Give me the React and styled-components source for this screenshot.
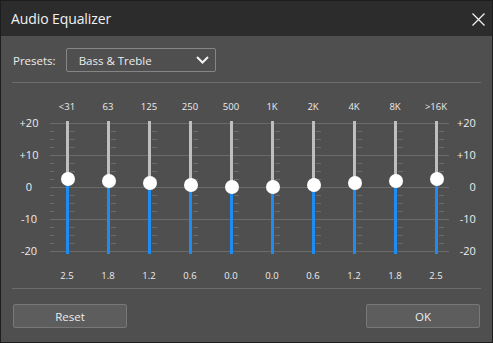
import React from 'react'
import styled, { createGlobalStyle } from 'styled-components'

const GlobalStyle = createGlobalStyle`
  html, body {
    margin: 0;
    padding: 0;
    background: #4f4f4f;
  }
  * {
    box-sizing: border-box;
  }
`

const Window = styled.div`
  width: 493px;
  height: 343px;
  border: 1px solid #1d1d1d;
  background: #4f4f4f;
  display: flex;
  flex-direction: column;
  font-family: "Open Sans", "Noto Sans", sans-serif;
  color: #ececec;
  overflow: hidden;
`

const TitleBar = styled.div`
  height: 35px;
  background: #2c2c2c;
  display: flex;
  align-items: center;
  justify-content: space-between;
  padding: 0 7px 0 10px;
  flex-shrink: 0;
`

const Title = styled.div`
  font-size: 14px;
  letter-spacing: -0.1px;
  color: #f2f2f2;
`

const CloseButton = styled.div`
  width: 13px;
  height: 13px;
  display: flex;
  margin-top: 1px;
`

const Body = styled.div`
  flex: 1;
  display: flex;
  flex-direction: column;
  padding: 0 11px;
`

const PresetRow = styled.div`
  display: flex;
  align-items: center;
  gap: 10px;
  margin-top: 12px;
  padding-left: 1px;
  font-size: 11.5px;
`

const Dropdown = styled.div`
  width: 150px;
  height: 24px;
  border: 1px solid #858585;
  border-radius: 2px;
  display: flex;
  align-items: center;
  justify-content: space-between;
  padding: 0 6px 0 12px;
  font-size: 11.5px;
`

const Separator = styled.div`
  height: 1px;
  background: #6c6c6c;
  margin-top: ${p => p.top || 0}px;
`

const Equalizer = styled.div`
  display: grid;
  grid-template-columns: 35px repeat(10, 41px) 1fr;
  grid-template-rows: 14px 133px 22px;
  row-gap: 7px;
  padding: 17px 0 5px;
  font-size: 9.5px;
`

const Scale = styled.div`
  grid-row: 2;
  grid-column: 2 / span 10;
  margin: 0 8px 0 3px;
  background:
    repeating-linear-gradient(to bottom, #6b6b6b 0 1px, transparent 1px 32px) 0 2px / 100% 100% no-repeat,
    repeating-linear-gradient(to bottom, #6b6b6b 0 1px, transparent 1px 8px) 0 2px / 4px 100% no-repeat;
`

const AxisLabel = styled.div`
  grid-row: 2;
  grid-column: ${p => (p.right ? 12 : 1)};
  display: flex;
  flex-direction: column;
  align-items: ${p => (p.right ? 'flex-end' : 'center')};
  padding: ${p => (p.right ? '0 11px 0 0' : '0 1px 0 0')};
  font-size: 11px;
`

const AxisTick = styled.div`
  height: 32px;
  flex-shrink: 0;
  line-height: 14px;
  white-space: nowrap;
  &:first-child {
    margin-top: -5px;
  }
`

const FreqLabel = styled.div`
  grid-row: ${p => p.row};
  grid-column: ${p => p.col};
  align-self: end;
  text-align: center;
  line-height: 14px;
  white-space: nowrap;
  padding-right: 1px;
`

const Slider = styled.div`
  grid-row: 2;
  grid-column: ${p => p.col};
  position: relative;
  background: repeating-linear-gradient(to bottom, #6b6b6b 0 1px, transparent 1px 8px) 23px 2px / 5px 100% no-repeat;
`

const Track = styled.div`
  position: absolute;
  left: 19px;
  top: 0;
  bottom: 0;
  width: 3px;
  background: linear-gradient(to bottom, #bfbfbf 0 ${p => p.split}px, #1e8cf0 ${p => p.split}px);
`

const Knob = styled.div`
  position: absolute;
  left: 13.5px;
  width: 14px;
  height: 14px;
  border-radius: 50%;
  background: #ffffff;
`

const Footer = styled.div`
  display: flex;
  justify-content: space-between;
  margin-top: 15px;
  padding: 0 1px;
`

const Button = styled.div`
  width: 114px;
  height: 24px;
  border: 1px solid #787878;
  border-radius: 2px;
  background: #5d5d5d;
  display: flex;
  align-items: center;
  justify-content: center;
  font-size: 11.5px;
`

const bands = [
  { label: '<31', value: 2.5 },
  { label: '63', value: 1.8 },
  { label: '125', value: 1.2 },
  { label: '250', value: 0.6 },
  { label: '500', value: 0.0 },
  { label: '1K', value: 0.0 },
  { label: '2K', value: 0.6 },
  { label: '4K', value: 1.2 },
  { label: '8K', value: 1.8 },
  { label: '>16K', value: 2.5 },
]

const axis = ['+20', '+10', '0', '-10', '-20']

const App = () => {
  return (
    <>
      <GlobalStyle />
      <Window>
        <TitleBar>
          <Title>Audio Equalizer</Title>
          <CloseButton>
            <svg width="13" height="13" viewBox="0 0 13 13">
              <path d="M0.5 0.5 L12.5 12.5 M12.5 0.5 L0.5 12.5" stroke="#f0f0f0" strokeWidth="1.3" />
            </svg>
          </CloseButton>
        </TitleBar>
        <Body>
          <PresetRow>
            <span>Presets:</span>
            <Dropdown>
              <span>Bass &amp; Treble</span>
              <svg width="13" height="8" viewBox="0 0 13 8">
                <path d="M1 1 L6.5 6.5 L12 1" fill="none" stroke="#f4f4f4" strokeWidth="2" />
              </svg>
            </Dropdown>
          </PresetRow>
          <Separator top={10} />
          <Equalizer>
            {bands.map((b, i) => (
              <FreqLabel key={'f' + i} row={1} col={i + 2}>{b.label}</FreqLabel>
            ))}
            <AxisLabel>
              {axis.map(a => <AxisTick key={a}>{a}</AxisTick>)}
            </AxisLabel>
            <Scale />
            {bands.map((b, i) => {
              const center = 66 - b.value * 3.2
              return (
                <Slider key={'s' + i} col={i + 2}>
                  <Track split={center} />
                  <Knob style={{ top: center - 7 }} />
                </Slider>
              )
            })}
            <AxisLabel right>
              {axis.map(a => <AxisTick key={a}>{a}</AxisTick>)}
            </AxisLabel>
            {bands.map((b, i) => (
              <FreqLabel key={'v' + i} row={3} col={i + 2}>{b.value.toFixed(1)}</FreqLabel>
            ))}
          </Equalizer>
          <Separator />
          <Footer>
            <Button>Reset</Button>
            <Button>OK</Button>
          </Footer>
        </Body>
      </Window>
    </>
  )
}

export default App
